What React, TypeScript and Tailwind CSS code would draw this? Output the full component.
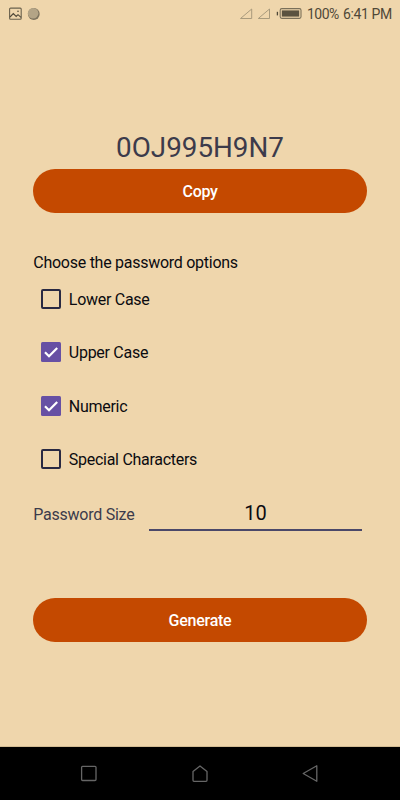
import { useState } from 'react'

const OPTIONS = ['Lower Case', 'Upper Case', 'Numeric', 'Special Characters']

function StatusBar() {
  return (
    <div className="flex items-center h-[27px] pl-[9px] pr-[9px] text-[#4f4838]">
      <svg width="32" height="14" viewBox="0 0 32 14" fill="none">
        <rect x="0.6" y="1.1" width="11.6" height="11.2" rx="1" stroke="#6a614d" strokeWidth="1.1" />
        <path d="M1 10 4.3 6.6 7.2 9.4l1.8-1.7L12 10.4" stroke="currentColor" strokeWidth="1.1" />
        <circle cx="9" cy="4.3" r="0.8" fill="currentColor" />
        <circle cx="24.8" cy="7" r="5.9" fill="#7d735e" />
        <circle cx="24.1" cy="6.3" r="5.3" fill="#b3a486" />
      </svg>
      <svg className="ml-auto" width="63" height="14" viewBox="0 0 63 14" fill="none">
        <path d="M1.5 11.5 12.7 2V11.5Z" stroke="#a99b7d" />
        <path d="M19.3 11.5 30.5 2V11.5Z" stroke="#a99b7d" />
        <path d="M38.4 4.8v3.6" stroke="currentColor" strokeWidth="1.3" />
        <rect x="41.2" y="1.6" width="20.8" height="9.8" rx="1.6" stroke="#7a705a" strokeWidth="1.1" />
        <rect x="42.8" y="3.4" width="17.4" height="6.2" fill="#5a5240" />
      </svg>
      <span className="ml-[5px] w-[31px] text-[14px] tracking-[-0.5px] leading-none whitespace-nowrap">100%</span>
      <span className="ml-[5px] w-[48px] text-[14px] tracking-[-0.4px] leading-none whitespace-nowrap">6:41 PM</span>
    </div>
  )
}

function Option({ label, checked, onToggle }: { label: string; checked: boolean; onToggle: () => void }) {
  return (
    <button role="checkbox" aria-checked={checked} onClick={onToggle} className="flex items-center h-[53.33px] pl-2">
      {checked ? (
        <svg width="20" height="20" viewBox="0 0 20 20" fill="none">
          <rect width="20" height="20" rx="1.5" fill="#6750a4" />
          <path d="m4 10.3 4 4 8.2-8.4" stroke="#fff" strokeWidth="2.2" />
        </svg>
      ) : (
        <span className="w-5 h-5 rounded-[2px] border-2 border-[#292942]" />
      )}
      <span className="ml-[7.5px] mt-[2px] text-[16px] tracking-[-0.28px] leading-5 text-[#0b0b10]">{label}</span>
    </button>
  )
}

function NavBar() {
  return (
    <div className="flex items-center justify-between h-[54px] pl-[80px] pr-[81px] border-t border-[#d2bb92] bg-black text-[#666]">
      <svg width="18" height="18" viewBox="0 0 18 18" fill="none" stroke="currentColor" strokeWidth="1.3">
        <rect x="1.6" y="1.3" width="14.4" height="14.2" rx="1" />
      </svg>
      <svg width="18" height="18" viewBox="0 0 18 18" fill="none" stroke="currentColor" strokeWidth="1.3" strokeLinejoin="round">
        <path d="M2 6.5 9 .9l7 5.6v8.8q0 1-1 1H3q-1 0-1-1Z" />
      </svg>
      <svg width="18" height="18" viewBox="0 0 18 18" fill="none" stroke="currentColor" strokeWidth="1.3" strokeLinejoin="round">
        <path d="M2.2 8.5 15.8.8v15.5Z" />
      </svg>
    </div>
  )
}

export default function App() {
  const [selected, setSelected] = useState(['Upper Case', 'Numeric'])
  const [size, setSize] = useState('10')

  const toggle = (name: string) =>
    setSelected((prev) => (prev.includes(name) ? prev.filter((n) => n !== name) : [...prev, name]))

  return (
    <div className="flex flex-col w-[400px] h-[800px] overflow-hidden bg-[#efd6ac] font-[Roboto,sans-serif]">
      <StatusBar />
      <main className="flex flex-col flex-1 px-[33.33px] pt-[102px]">
        <p className="h-[40px] text-center text-[27.8px] leading-[38px] text-[#3c3b4b]">0OJ995H9N7</p>
        <button className="h-[44.4px] shrink-0 rounded-full bg-[#c44900] pt-[2px] text-[16px] tracking-[-0.35px] font-medium text-white">
          Copy
        </button>
        <p className="mt-[39px] h-[20px] text-[16px] tracking-[-0.27px] leading-[22px] text-[#0b0b10]">
          Choose the password options
        </p>
        <div className="flex flex-col">
          {OPTIONS.map((name) => (
            <Option key={name} label={name} checked={selected.includes(name)} onToggle={() => toggle(name)} />
          ))}
        </div>
        <div className="flex items-start mt-[12px] h-[33px]">
          <span className="w-[115.5px] mt-[7px] text-[16px] tracking-[-0.25px] leading-5 text-[#3c3b4b]">Password Size</span>
          <input
            value={size}
            onChange={(e) => setSize(e.target.value)}
            inputMode="numeric"
            className="w-[213.5px] h-[33px] pb-[1px] border-b-2 border-[#4a4869] bg-transparent text-center text-[20px] text-[#0b0b10] outline-none"
          />
        </div>
        <button className="mt-[67px] h-[44.4px] shrink-0 rounded-full bg-[#c44900] pt-[2px] text-[16px] tracking-[-0.25px] font-medium text-white">
          Generate
        </button>
      </main>
      <NavBar />
    </div>
  )
}
